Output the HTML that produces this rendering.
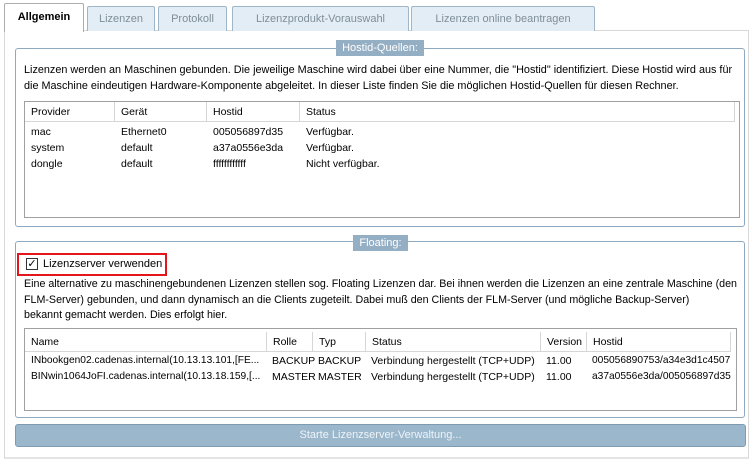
<!DOCTYPE html>
<html><head><meta charset="utf-8"><style>
*{box-sizing:border-box;margin:0;padding:0}
body{width:750px;height:460px;background:#fff;font-family:"Liberation Sans",sans-serif;font-size:10.5px;color:#000;position:relative;overflow:hidden}
.a{position:absolute;white-space:nowrap}
.tab{position:absolute;top:6px;height:25px;background:#e3edf5;border:1px solid #9fb6c8;border-bottom:none;color:#7f8e99;text-align:center;line-height:24px;border-radius:2px 2px 0 0;font-size:11px}
.grp{position:absolute;border:1px solid #8fa9c0;border-radius:3px}
.leg{position:absolute;background:#94aec4;color:#fff;text-align:center;height:16px;line-height:16px;font-size:11px}
.tbl{position:absolute;border:1px solid #a0a0a0;background:#fff;overflow:hidden}
.hd{position:absolute;top:0;height:20px;border-right:1px solid #d6d6d6;border-bottom:1px solid #d6d6d6;line-height:20px;padding-left:6px;background:#fff}
</style></head><body>
<div class="a" style="left:4px;top:30px;width:745px;height:429px;border:1px solid #d8d8d8;border-bottom:2px solid #e4e4e4"></div>
<div class="a" style="left:4px;top:3px;width:80px;height:29px;background:#fff;border:1px solid #adadad;border-bottom:none;border-radius:2px 2px 0 0;font-weight:bold;text-align:center;line-height:27px;font-size:11px">Allgemein</div>
<div class="tab" style="left:87px;width:68px">Lizenzen</div>
<div class="tab" style="left:158px;width:69px">Protokoll</div>
<div class="tab" style="left:232px;width:177px">Lizenzprodukt-Vorauswahl</div>
<div class="tab" style="left:411px;width:184px">Lizenzen online beantragen</div>

<div class="grp" style="left:15px;top:48px;width:730px;height:179px"></div>
<div class="leg" style="left:336px;top:40px;width:88px">Hostid-Quellen:</div>
<div class="a" style="left:24px;top:63px;line-height:15.5px;font-size:10.85px">Lizenzen werden an Maschinen gebunden. Die jeweilige Maschine wird dabei über eine Nummer, die "Hostid" identifiziert. Diese Hostid wird aus für<br>die Maschine eindeutigen Hardware-Komponente abgeleitet. In dieser Liste finden Sie die möglichen Hostid-Quellen für diesen Rechner.</div>
<div class="tbl" style="left:24px;top:101px;width:716px;height:117px">
<div class="hd" style="left:0;width:90px">Provider</div>
<div class="hd" style="left:90px;width:92px">Gerät</div>
<div class="hd" style="left:182px;width:93px">Hostid</div>
<div class="hd" style="left:275px;width:435px">Status</div>
<div class="a" style="left:6px;top:22px;line-height:16px">mac<br>system<br>dongle</div>
<div class="a" style="left:96px;top:22px;line-height:16px">Ethernet0<br>default<br>default</div>
<div class="a" style="left:188px;top:22px;line-height:16px">005056897d35<br>a37a0556e3da<br>ffffffffffff</div>
<div class="a" style="left:281px;top:22px;line-height:16px">Verfügbar.<br>Verfügbar.<br>Nicht verfügbar.</div>
</div>

<div class="grp" style="left:15px;top:241px;width:730px;height:177px"></div>
<div class="leg" style="left:353px;top:235px;width:55px">Floating:</div>
<div class="a" style="left:17px;top:253px;width:150px;height:23px;border:2px solid #e3161b;background:#fff"></div>
<div class="a" style="left:26px;top:258px;width:12px;height:12px;border:1px solid #333;font-size:11px;line-height:10px;text-align:center">✓</div>
<div class="a" style="left:43px;top:258px;font-size:11px">Lizenzserver verwenden</div>
<div class="a" style="left:24px;top:277px;line-height:15.5px;font-size:10.7px">Eine alternative zu maschinengebundenen Lizenzen stellen sog. Floating Lizenzen dar. Bei ihnen werden die Lizenzen an eine zentrale Maschine (den<br>FLM-Server) gebunden, und dann dynamisch an die Clients zugeteilt. Dabei muß den Clients der FLM-Server (und mögliche Backup-Server)<br>bekannt gemacht werden. Dies erfolgt hier.</div>
<div class="tbl" style="left:24px;top:328px;width:713px;height:83px">
<div class="hd" style="left:0;width:242px;top:3px">Name</div>
<div class="hd" style="left:242px;width:46px;top:3px">Rolle</div>
<div class="hd" style="left:288px;width:53px;top:3px">Typ</div>
<div class="hd" style="left:341px;width:175px;top:3px">Status</div>
<div class="hd" style="left:516px;width:46px;top:3px">Version</div>
<div class="hd" style="left:562px;width:144px;top:3px">Hostid</div>
<div class="a" style="left:6px;top:24px;line-height:16px;font-size:10.2px">INbookgen02.cadenas.internal(10.13.13.101,[FE...<br>BINwin1064JoFI.cadenas.internal(10.13.18.159,[...</div>
<div class="a" style="left:247px;top:24px;line-height:16px">BACKUP<br>MASTER</div>
<div class="a" style="left:293px;top:24px;line-height:16px">BACKUP<br>MASTER</div>
<div class="a" style="left:346px;top:24px;line-height:16px">Verbindung hergestellt (TCP+UDP)<br>Verbindung hergestellt (TCP+UDP)</div>
<div class="a" style="left:521px;top:24px;line-height:16px">11.00<br>11.00</div>
<div class="a" style="left:567px;top:24px;line-height:16px;font-size:10.2px">005056890753/a34e3d1c4507<br>a37a0556e3da/005056897d35</div>
</div>

<div class="a" style="left:15px;top:424px;width:731px;height:23px;background:#9bb7cc;border:1px solid #7f9bb2;border-radius:3px;color:#eef3f7;text-align:center;line-height:21px;font-size:11px">Starte Lizenzserver-Verwaltung...</div>
</body></html>
